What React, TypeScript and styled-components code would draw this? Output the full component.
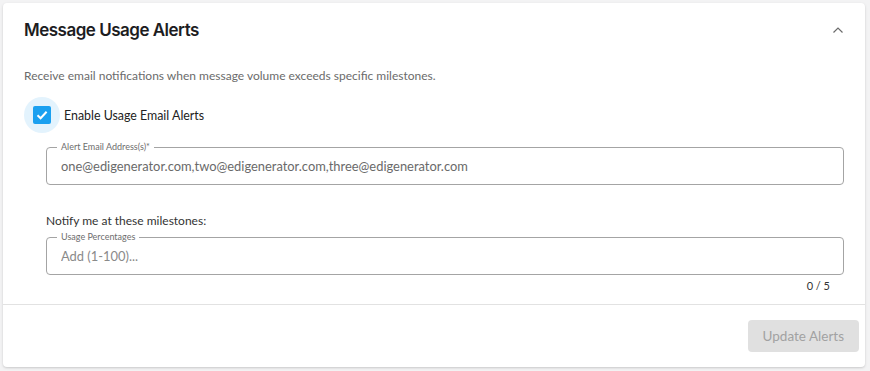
import React, { useState } from 'react';
import styled, { createGlobalStyle } from 'styled-components';

const GlobalStyle = createGlobalStyle`
  html, body {
    margin: 0;
    padding: 0;
    background: #f3f3f4;
    font-family: 'Lato', 'Noto Sans', sans-serif;
  }
  * {
    box-sizing: border-box;
  }
`;

const Page = styled.div`
  padding: 3px 5px 4px 3px;
`;

const Card = styled.section`
  background: #ffffff;
  border-radius: 4px;
  box-shadow: 0 1px 3px rgba(0, 0, 0, 0.12), 0 1px 2px rgba(0, 0, 0, 0.06);
  display: flex;
  flex-direction: column;
`;

const Header = styled.div`
  height: 56px;
  display: flex;
  align-items: center;
  justify-content: space-between;
  padding: 0 15px 2px 21px;
`;

const Title = styled.h2`
  margin: 0;
  font-family: 'Inter', 'Noto Sans', sans-serif;
  font-size: 17px;
  font-weight: 600;
  color: #1d1d1f;
  letter-spacing: -0.5px;
`;

const ToggleButton = styled.button`
  border: 0;
  background: transparent;
  padding: 0;
  width: 24px;
  height: 24px;
  display: flex;
  align-items: center;
  justify-content: center;
  cursor: pointer;
  color: #666;
`;

const Body = styled.div`
  padding: 0 21px;
  display: flex;
  flex-direction: column;
`;

const Description = styled.p`
  margin: 8px 0 0;
  font-size: 12px;
  line-height: 18px;
  color: #6b6b6b;
`;

const CheckRow = styled.label`
  margin-top: 12px;
  display: flex;
  align-items: center;
  gap: 4px;
  cursor: pointer;
`;

const CheckHalo = styled.span`
  width: 36px;
  height: 36px;
  border-radius: 50%;
  background: #e3f3fd;
  display: flex;
  align-items: center;
  justify-content: center;
`;

const CheckBox = styled.span<{ $checked: boolean }>`
  width: 18px;
  height: 18px;
  border-radius: 2px;
  background: ${(p) => (p.$checked ? '#1aa0f0' : '#fff')};
  border: ${(p) => (p.$checked ? 'none' : '2px solid #777')};
  display: flex;
  align-items: center;
  justify-content: center;
`;

const CheckLabel = styled.span`
  font-size: 12.4px;
  color: #222;
`;

const Field = styled.div<{ $top: number }>`
  position: relative;
  margin: ${(p) => p.$top}px 0 0 22px;
  height: 38px;
  border: 1px solid #a4a4a4;
  border-radius: 4px;
  display: flex;
  align-items: center;
  padding: 0 14px;
`;

const FieldLabel = styled.span`
  position: absolute;
  top: -7px;
  left: 10px;
  padding: 0 4px;
  background: #fff;
  font-size: 9px;
  line-height: 12px;
  color: #6e6e6e;
`;

const FieldInput = styled.input`
  border: 0;
  outline: none;
  width: 100%;
  font-family: inherit;
  font-size: 12.9px;
  color: #6a6a6a;
  background: transparent;
  padding: 0;
  &::placeholder {
    color: #8a8a8a;
  }
`;

const SubHeading = styled.div`
  margin: 28px 0 0 22px;
  font-size: 12px;
  line-height: 16px;
  color: #333;
`;

const Counter = styled.div`
  margin-top: 4px;
  padding-right: 14px;
  text-align: right;
  font-size: 11px;
  line-height: 14px;
  color: #333;
`;

const Divider = styled.hr`
  margin: 11px 0 0;
  border: 0;
  border-top: 1px solid #e2e2e2;
`;

const Footer = styled.div`
  display: flex;
  justify-content: flex-end;
  padding: 15px 6px 15px;
`;

const SubmitButton = styled.button`
  height: 32px;
  padding: 0 15px;
  border: 0;
  border-radius: 4px;
  background: #e0e0e0;
  color: #a2a2a2;
  font-family: inherit;
  font-size: 13.5px;
  cursor: default;
`;

export default function App() {
  const [enabled, setEnabled] = useState(true);
  const [emails, setEmails] = useState(
    'one@edigenerator.com,two@edigenerator.com,three@edigenerator.com'
  );
  const [pct, setPct] = useState('');
  const milestones: number[] = [];

  return (
    <>
      <GlobalStyle />
      <Page>
        <Card>
          <Header>
            <Title>Message Usage Alerts</Title>
            <ToggleButton aria-label="collapse">
              <svg width="12" height="8" viewBox="0 0 12 8" fill="none">
                <polyline points="1.5,6.5 6,2 10.5,6.5" stroke="#6b6b6b" strokeWidth="1.2" />
              </svg>
            </ToggleButton>
          </Header>
          <Body>
            <Description>
              Receive email notifications when message volume exceeds specific milestones.
            </Description>
            <CheckRow onClick={() => setEnabled(!enabled)}>
              <CheckHalo>
                <CheckBox $checked={enabled}>
                  {enabled && (
                    <svg width="14" height="14" viewBox="0 0 14 14" fill="none">
                      <polyline
                        points="2.5,7.2 5.6,10.2 11.6,3.8"
                        stroke="#fff"
                        strokeWidth="2"
                      />
                    </svg>
                  )}
                </CheckBox>
              </CheckHalo>
              <CheckLabel>Enable Usage Email Alerts</CheckLabel>
            </CheckRow>
            <Field $top={14}>
              <FieldLabel>Alert Email Address(s)*</FieldLabel>
              <FieldInput value={emails} onChange={(e) => setEmails(e.target.value)} />
            </Field>
            <SubHeading>Notify me at these milestones:</SubHeading>
            <Field $top={8}>
              <FieldLabel>Usage Percentages</FieldLabel>
              <FieldInput
                placeholder="Add (1-100)..."
                value={pct}
                onChange={(e) => setPct(e.target.value)}
              />
            </Field>
            <Counter>{milestones.length} / 5</Counter>
          </Body>
          <Divider />
          <Footer>
            <SubmitButton disabled>Update Alerts</SubmitButton>
          </Footer>
        </Card>
      </Page>
    </>
  );
}
